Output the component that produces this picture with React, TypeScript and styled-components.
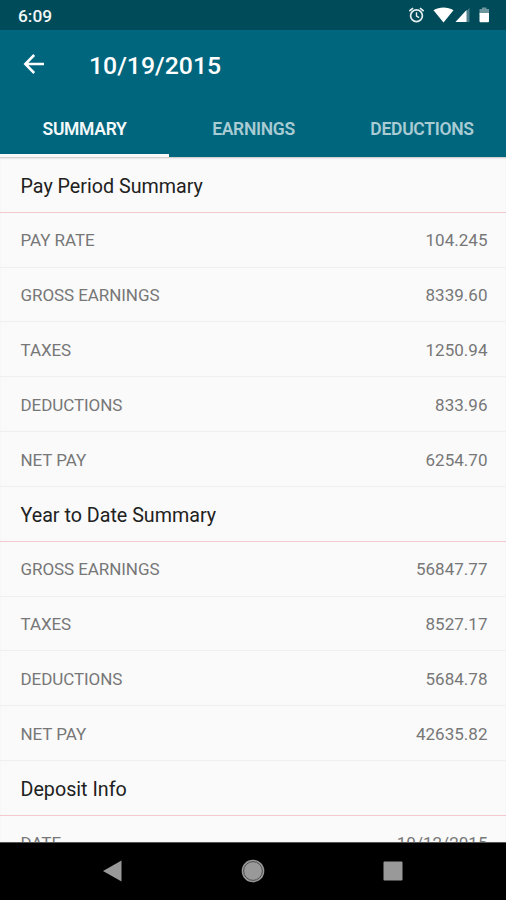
import React from "react";
import styled, { createGlobalStyle } from "styled-components";

const GlobalStyle = createGlobalStyle`
  * { box-sizing: border-box; }
  html, body { margin: 0; padding: 0; background: #000; }
  body { font-family: Roboto, "Liberation Sans", sans-serif; overflow: hidden; }
`;

const Screen = styled.div`
  width: 506px;
  height: 900px;
  display: flex;
  flex-direction: column;
  background: #fafafa;
  overflow: hidden;
`;

const StatusBar = styled.div`
  flex: none;
  height: 30px;
  padding: 2px 13px 0 18px;
  display: flex;
  align-items: center;
  justify-content: space-between;
  background: #004b59;
  color: #f2f7f8;
`;

const Clock = styled.span`
  font-size: 17.3px;
  font-weight: 500;
  line-height: 28px;
`;

const StatusIcons = styled.svg`
  display: block;
  width: 84px;
  height: 20px;
`;

const Header = styled.header`
  flex: none;
  height: 127px;
  display: flex;
  flex-direction: column;
  background: #00667e;
`;

const Toolbar = styled.div`
  height: 71px;
  display: flex;
  align-items: center;
  padding-left: 23px;
  color: #fff;
`;

const BackButton = styled.button`
  width: 22px;
  height: 22px;
  padding: 0;
  margin: 0 44px 3px 0;
  border: 0;
  background: none;
  color: inherit;

  svg { display: block; }
`;

const Title = styled.h1`
  margin: 0;
  font-size: 24.8px;
  font-weight: 500;
  line-height: 31px;
  letter-spacing: 0;
`;

const Tabs = styled.nav`
  flex: 1;
  display: grid;
  grid-template-columns: 169px 169px 168px;
`;

const Tab = styled.button<{ $active?: boolean }>`
  padding: 2px 0 ${(p) => (p.$active ? 0 : 3)}px;
  border: 0;
  border-bottom: ${(p) => (p.$active ? "3px solid #fafafa" : "0")};
  background: none;
  color: ${(p) => (p.$active ? "#f4f9fa" : "#a9cbd3")};
  font: 600 17.5px/20px Roboto, sans-serif;
  letter-spacing: -0.3px;
`;

const Content = styled.main`
  flex: 1;
  min-height: 0;
  overflow: hidden;
  padding-top: 1px;
  box-shadow: inset 0 2px 2px -1px rgba(0, 0, 0, 0.22);
`;

const SectionTitle = styled.h2`
  margin: 0;
  height: 54.84px;
  padding: 2px 20px 0 20.5px;
  border-bottom: 1px solid #f5c8d0;
  color: #212121;
  font-size: 19.7px;
  font-weight: 400;
  line-height: 53px;
`;

const Row = styled.div`
  height: 54.84px;
  padding: 0.45px 18.5px 0 20.5px;
  display: flex;
  justify-content: space-between;
  border-bottom: 1px solid #efefef;
  color: #777;
  font-size: 17px;
  font-weight: 370;
  line-height: 54px;
`;

const Label = styled.span`
  letter-spacing: -0.07px;
`;

const Value = styled.span`
  letter-spacing: 0.03px;
`;

const NavBar = styled.footer`
  flex: none;
  height: 58px;
  padding-bottom: 2px;
  display: grid;
  grid-template-columns: repeat(3, 140px);
  justify-content: center;
  place-items: center;
  background: #000;
  border-top: 1px solid #555;
`;

const sections = [
  {
    title: "Pay Period Summary",
    rows: [
      ["PAY RATE", "104.245"],
      ["GROSS EARNINGS", "8339.60"],
      ["TAXES", "1250.94"],
      ["DEDUCTIONS", "833.96"],
      ["NET PAY", "6254.70"],
    ],
  },
  {
    title: "Year to Date Summary",
    rows: [
      ["GROSS EARNINGS", "56847.77"],
      ["TAXES", "8527.17"],
      ["DEDUCTIONS", "5684.78"],
      ["NET PAY", "42635.82"],
    ],
  },
  { title: "Deposit Info", rows: [["DATE", "10/12/2015"]] },
];

export default function App() {
  return (
    <>
      <GlobalStyle />
      <Screen>
        <StatusBar>
          <Clock>6:09</Clock>
          <StatusIcons viewBox="0 0 84 20" fill="none">
            <g stroke="#e6eff1" strokeWidth="1.7">
              <circle cx="7.5" cy="9.7" r="5.9" />
              <path d="M7.5 6.2v3.9l2.7 1.6" strokeWidth="1.4" />
              <path d="M0.3 5.2 4 2.1M14.7 5.2 11 2.1" />
            </g>
            <path d="M24.500 4.200C30.500 0.600 38.500 0.600 44.500 4.200L34.500 16.500Z" fill="#fff" />
            <path d="M60.500 2v14H46.500Z" fill="#4d808a" />
            <path d="M57.500 4v12H46.500Z" fill="#fff" />
            <path d="M73 3V1.500h4.500V3h2.500V8H70.500V3Z" fill="#6e969e" />
            <path d="M70.500 7h9.500V15.200a1 1 0 0 1-1 1h-7.500a1 1 0 0 1-1-1Z" fill="#fff" />
          </StatusIcons>
        </StatusBar>
        <Header>
          <Toolbar>
            <BackButton aria-label="Back">
              <svg width="22" height="22" viewBox="0 0 22 22" fill="none" stroke="#fff" strokeWidth="2.500">
                <path d="M21 11H3M11.200 2 2.300 11l8.900 9" />
              </svg>
            </BackButton>
            <Title>10/19/2015</Title>
          </Toolbar>
          <Tabs>
            <Tab $active>SUMMARY</Tab>
            <Tab>EARNINGS</Tab>
            <Tab>DEDUCTIONS</Tab>
          </Tabs>
        </Header>
        <Content>
          {sections.map((section) => (
            <section key={section.title}>
              <SectionTitle>{section.title}</SectionTitle>
              {section.rows.map(([label, value]) => (
                <Row key={label}>
                  <Label>{label}</Label>
                  <Value>{value}</Value>
                </Row>
              ))}
            </section>
          ))}
        </Content>
        <NavBar>
          <svg width="24" height="24" viewBox="0 0 24 24">
            <path d="M2 12 20.500 1.500v21Z" fill="#999" />
          </svg>
          <svg width="24" height="24" viewBox="0 0 24 24">
            <circle cx="12" cy="12" r="11.300" fill="#999" />
            <circle cx="12" cy="12" r="9.400" fill="none" stroke="#444" strokeWidth="0.900" />
          </svg>
          <svg width="24" height="24" viewBox="0 0 24 24">
            <rect x="2.500" y="2.500" width="19" height="19" rx="1" fill="#999" />
          </svg>
        </NavBar>
      </Screen>
    </>
  );
}
